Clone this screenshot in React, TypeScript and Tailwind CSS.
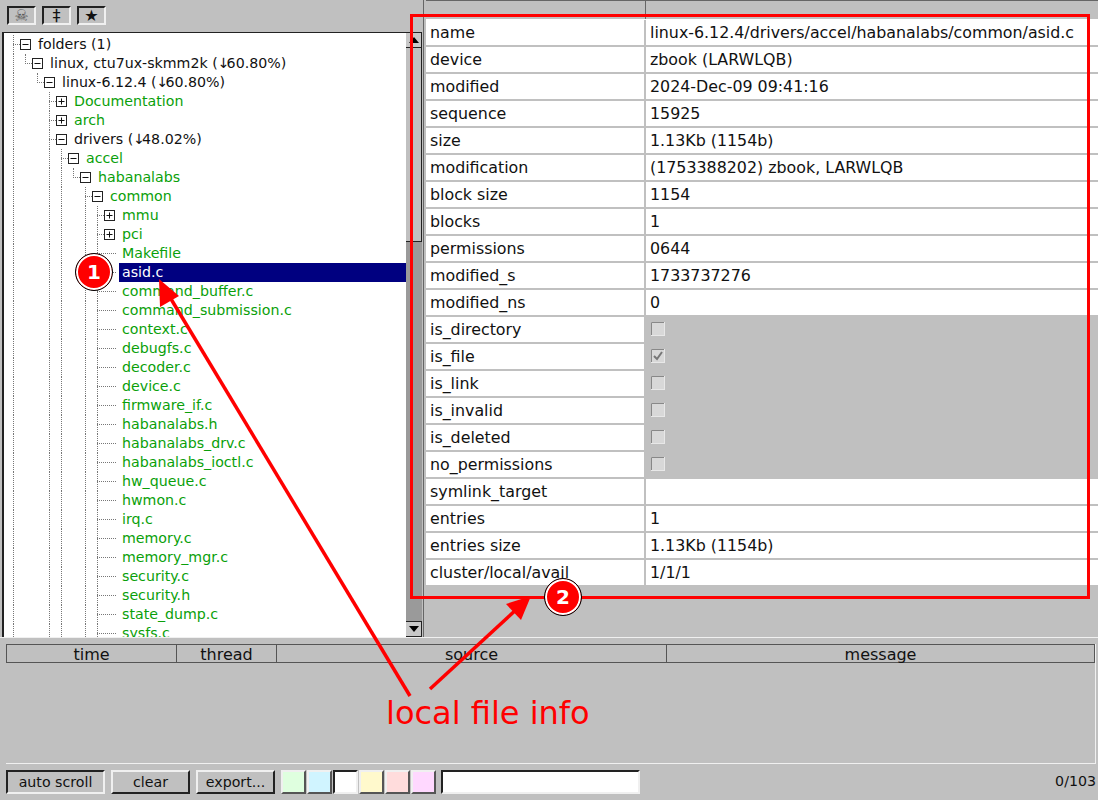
const treeRows = [
  { label: 'folders (1)', depth: 0, kind: 'open', dark: true },
  { label: 'linux, ctu7ux-skmm2k (↓60.80%)', depth: 1, kind: 'open', dark: true },
  { label: 'linux-6.12.4 (↓60.80%)', depth: 2, kind: 'open', dark: true },
  { label: 'Documentation', depth: 3, kind: 'closed' },
  { label: 'arch', depth: 3, kind: 'closed' },
  { label: 'drivers (↓48.02%)', depth: 3, kind: 'open', dark: true },
  { label: 'accel', depth: 4, kind: 'open' },
  { label: 'habanalabs', depth: 5, kind: 'open' },
  { label: 'common', depth: 6, kind: 'open' },
  { label: 'mmu', depth: 7, kind: 'closed' },
  { label: 'pci', depth: 7, kind: 'closed' },
  { label: 'Makefile', depth: 7, kind: 'file' },
  { label: 'asid.c', depth: 7, kind: 'file', selected: true },
  ...[
    'command_buffer.c',
    'command_submission.c',
    'context.c',
    'debugfs.c',
    'decoder.c',
    'device.c',
    'firmware_if.c',
    'habanalabs.h',
    'habanalabs_drv.c',
    'habanalabs_ioctl.c',
    'hw_queue.c',
    'hwmon.c',
    'irq.c',
    'memory.c',
    'memory_mgr.c',
    'security.c',
    'security.h',
    'state_dump.c',
    'sysfs.c',
  ].map((label) => ({ label, depth: 7, kind: 'file' })),
];

// first row index from which a guide runs on to the bottom of the tree
const longGuides = [
  { x: 13, from: 0 },
  { x: 49, from: 3 },
  { x: 61, from: 6 },
  { x: 85, from: 8 },
  { x: 97, from: 9 },
];

const infoRows = [
  { name: 'name', value: 'linux-6.12.4/drivers/accel/habanalabs/common/asid.c' },
  { name: 'device', value: 'zbook (LARWLQB)' },
  { name: 'modified', value: '2024-Dec-09 09:41:16' },
  { name: 'sequence', value: '15925' },
  { name: 'size', value: '1.13Kb (1154b)' },
  { name: 'modification', value: '(1753388202) zbook, LARWLQB' },
  { name: 'block size', value: '1154' },
  { name: 'blocks', value: '1' },
  { name: 'permissions', value: '0644' },
  { name: 'modified_s', value: '1733737276' },
  { name: 'modified_ns', value: '0' },
  { name: 'is_directory', check: false },
  { name: 'is_file', check: true },
  { name: 'is_link', check: false },
  { name: 'is_invalid', check: false },
  { name: 'is_deleted', check: false },
  { name: 'no_permissions', check: false },
  { name: 'symlink_target', value: '' },
  { name: 'entries', value: '1' },
  { name: 'entries size', value: '1.13Kb (1154b)' },
  { name: 'cluster/local/avail', value: '1/1/1' },
];

const logColumns = [
  { title: 'time', width: 'w-[170px]' },
  { title: 'thread', width: 'w-[100px]' },
  { title: 'source', width: 'w-[390px]' },
  { title: 'message', width: 'flex-1' },
];

const swatches = [
  'bg-[#dfffdf] border-t-[#f0f0f0] border-l-[#f0f0f0] border-b-[#555555] border-r-[#555555]',
  'bg-[#d0f4ff] border-t-[#f0f0f0] border-l-[#f0f0f0] border-b-[#555555] border-r-[#555555]',
  'bg-white border-t-[#222222] border-l-[#222222] border-b-[#f0f0f0] border-r-[#f0f0f0]',
  'bg-[#fff9cc] border-t-[#f0f0f0] border-l-[#f0f0f0] border-b-[#555555] border-r-[#555555]',
  'bg-[#ffdcdc] border-t-[#f0f0f0] border-l-[#f0f0f0] border-b-[#555555] border-r-[#555555]',
  'bg-[#ffd8ff] border-t-[#f0f0f0] border-l-[#f0f0f0] border-b-[#555555] border-r-[#555555]',
];

const raised = 'border-2 border-t-[#f0f0f0] border-l-[#f0f0f0] border-b-[#222222] border-r-[#222222]';
const pressed = 'border-2 border-t-[#222222] border-l-[#222222] border-b-[#f0f0f0] border-r-[#f0f0f0]';

const Toggle = ({ open }: { open: boolean }) => (
  <svg width="11" height="11" viewBox="0 0 11 11" className="shrink-0">
    <rect x="0.5" y="0.5" width="10" height="10" fill="#fff" stroke="#222" />
    <path d={open ? 'M2.5 5.5h6' : 'M2.5 5.5h6M5.5 2.5v6'} stroke="#111" fill="none" />
  </svg>
);

// the arrow glyph sits tighter in the original than in DejaVu
const TreeLabel = ({ text }: { text: string }) => {
  const [before, after] = text.split('↓');
  if (after === undefined) return <>{text}</>;
  return (
    <>
      {before}
      <span className="tracking-[-3px]">↓</span>
      {after}
    </>
  );
};

const TreeRow = ({ row, index }: { row: any; index: number }) => {
  const cornerX = 13 + row.depth * 12;
  const textColor = row.selected ? 'text-white' : row.dark ? 'text-[#111111]' : 'text-[#0a9f0a]';
  const stubEnd = row.kind === 'file' ? 116 : 20 + row.depth * 12;

  return (
    <div
      className="relative flex h-[19px] shrink-0 items-center"
      style={{ paddingLeft: 16 + row.depth * 12 }}
    >
      {longGuides
        .filter((g) => index >= g.from)
        .map((g) => (
          <span
            key={g.x}
            className="absolute top-0 bottom-0 border-l border-dotted border-[#777777]"
            style={{ left: g.x - 4 }}
          />
        ))}
      {!longGuides.some((g) => g.x === cornerX && index >= g.from) && (
        <span
          className="absolute top-0 h-[10px] border-l border-dotted border-[#777777]"
          style={{ left: cornerX - 4 }}
        />
      )}
      <span
        className="absolute top-[9px] border-t border-dotted border-[#777777]"
        style={{ left: cornerX - 4, width: stubEnd - cornerX }}
      />
      {row.kind === 'file' ? null : (
        <span className="relative mr-[4px]">
          <Toggle open={row.kind === 'open'} />
        </span>
      )}
      {row.kind === 'file' ? (
        <span
          className={`relative ml-[15px] h-[19px] flex-1 pl-[3px] leading-[19px] ${textColor} ${row.selected ? 'bg-[#000080]' : ''}`}
        >
          {row.label}
        </span>
      ) : (
        <span className={`relative pl-[3px] leading-[19px] whitespace-nowrap ${textColor}`}>
          <TreeLabel text={row.label} />
        </span>
      )}
    </div>
  );
};

const InfoRow = ({ row }: { row: any }) => {
  const isCheck = row.check !== undefined;
  return (
    <div className="flex h-[27px] shrink-0 pb-[2px]">
      <div className="flex w-[218px] shrink-0 items-center bg-white pl-[4px] text-[#111111]">{row.name}</div>
      <div className={`ml-[2px] flex flex-1 items-center pl-[4px] text-[#111111] ${isCheck ? '' : 'bg-white'}`}>
        {isCheck ? (
          <svg width="14" height="14" viewBox="0 0 14 14" className="mb-[2px] ml-[1px]">
            <rect x="0.5" y="0.5" width="13" height="13" fill="#d8d8d8" stroke="#e8e8e8" />
            <path d="M0.5 13V0.5H13" fill="none" stroke="#888888" />
            {row.check && <path d="M3 7l3 3 5-7" fill="none" stroke="#777777" strokeWidth="2" />}
          </svg>
        ) : (
          row.value
        )}
      </div>
    </div>
  );
};

const Badge = ({ n, className }: { n: number; className: string }) => (
  <div
    className={`absolute flex h-[38px] w-[38px] items-center justify-center rounded-full border border-black bg-[#ff0000] text-[20px] font-bold text-white shadow-[inset_0_0_0_2px_#ffffff] ${className}`}
  >
    {n}
  </div>
);

export default function App() {
  return (
    <div className="relative flex h-[800px] w-[1098px] flex-col overflow-hidden bg-[#c0c0c0] font-['DejaVu_Sans',sans-serif] text-[14.2px]">
      <div className="flex h-[637px] shrink-0">
        {/* left side: toolbar and folder tree */}
        <div className="flex w-[423px] shrink-0 flex-col pr-[1px]">
          <div className="flex h-[32px] shrink-0 gap-[6px] pt-[6px] pl-[7px]">
            <div className={`flex h-[19px] w-[29px] items-center justify-center bg-[#c0c0c0] text-[16px] text-[#555555] ${pressed}`}>☠</div>
            <div className={`flex h-[19px] w-[29px] items-center justify-center bg-[#c0c0c0] text-[16px] text-[#111111] ${pressed}`}>‡</div>
            <div className={`flex h-[19px] w-[29px] items-center justify-center bg-[#c0c0c0] text-[16px] text-[#111111] ${pressed}`}>★</div>
          </div>
          <div className="ml-[2px] flex min-h-0 flex-1 border-t border-l-2 border-[#222222]">
            <div className="flex min-w-0 flex-1 flex-col overflow-hidden bg-white pt-[2px]">
              {treeRows.map((row, i) => (
                <TreeRow key={row.label} row={row} index={i} />
              ))}
            </div>
            <div className="flex w-[16px] shrink-0 flex-col bg-[#9a9a9a]">
              <div className="flex h-[15px] shrink-0 items-center justify-center border-r border-b border-[#222222] bg-[#c8c8c8]">
                <span className="h-0 w-0 border-x-[5px] border-b-[6px] border-x-transparent border-b-black" />
              </div>
              <div className="h-[194px] shrink-0 border-r border-b border-[#222222] bg-[#c0c0c0]" />
              <div className="flex-1" />
              <div className="flex h-[16px] shrink-0 items-center justify-center border-t border-r border-b border-[#222222] bg-[#c8c8c8]">
                <span className="h-0 w-0 border-x-[5px] border-t-[6px] border-x-transparent border-t-black" />
              </div>
            </div>
          </div>
        </div>

        {/* right side: file info table */}
        <div className="flex min-w-0 flex-1 flex-col border-l border-[#666666] pl-[2px] text-[15.85px]">
          <div className="flex h-[19px] shrink-0 border-t border-[#666666]">
            <div className="w-[220px] shrink-0 border-r border-[#666666]" />
            <div className="flex-1" />
          </div>
          <div className="flex flex-col border-t border-white">
            {infoRows.map((row) => (
              <InfoRow key={row.name} row={row} />
            ))}
          </div>
        </div>
      </div>

      {/* bottom: log panel */}
      <div className="flex flex-1 flex-col border-t border-[#f0f0f0]">
        <div className="mt-[6px] mr-[2px] ml-[6px] flex h-[120px] shrink-0 flex-col border-r border-b border-[#f0f0f0]">
          <div className="flex h-[19px] shrink-0 border border-[#555555] text-[16px] leading-[19px] text-[#111111]">
            {logColumns.map((col, i) => (
              <div
                key={col.title}
                className={`text-center ${col.width} ${i < 3 ? 'border-r border-[#555555]' : ''}`}
              >
                {col.title}
              </div>
            ))}
          </div>
        </div>
        <div className="mt-[6px] flex h-[24px] items-center pl-[6px] text-[#111111]">
          <button className={`mr-[6px] h-[24px] w-[99px] bg-[#c0c0c0] ${pressed}`}>auto scroll</button>
          <button className={`mr-[6px] h-[24px] w-[79px] bg-[#c0c0c0] ${raised}`}>clear</button>
          <button className={`mr-[6px] h-[24px] w-[79px] bg-[#c0c0c0] ${raised}`}>export...</button>
          <div className="flex gap-[1px]">
            {swatches.map((cls) => (
              <div key={cls} className={`h-[24px] w-[25px] border-2 ${cls}`} />
            ))}
          </div>
          <input
            readOnly
            className="ml-[5px] h-[24px] w-[199px] border-2 border-t-[#222222] border-l-[#222222] border-b-[#f0f0f0] border-r-[#f0f0f0] bg-white"
          />
          <span className="ml-auto pr-[2px]">0/103</span>
        </div>
      </div>

      {/* annotations drawn over the screenshot */}
      <div className="absolute top-[14px] left-[410px] h-[585px] w-[680px] border-[3px] border-[#ff0000]" />
      <svg className="absolute inset-0" width="1098" height="800" viewBox="0 0 1098 800">
        <path d="M410 696L168 294" stroke="#ff0000" strokeWidth="3.5" fill="none" />
        <path d="M159 279L179 296L160 307Z" fill="#ff0000" />
        <path d="M430 689L518 608" stroke="#ff0000" strokeWidth="3.5" fill="none" />
        <path d="M531 596L521 620L506 604Z" fill="#ff0000" />
      </svg>
      <Badge n={1} className="top-[253px] left-[75px]" />
      <Badge n={2} className="top-[578px] left-[544px]" />
      <span className="absolute top-[694px] left-[386px] text-[32px] leading-[38px] text-[#ff0000]">local file info</span>
    </div>
  );
}
